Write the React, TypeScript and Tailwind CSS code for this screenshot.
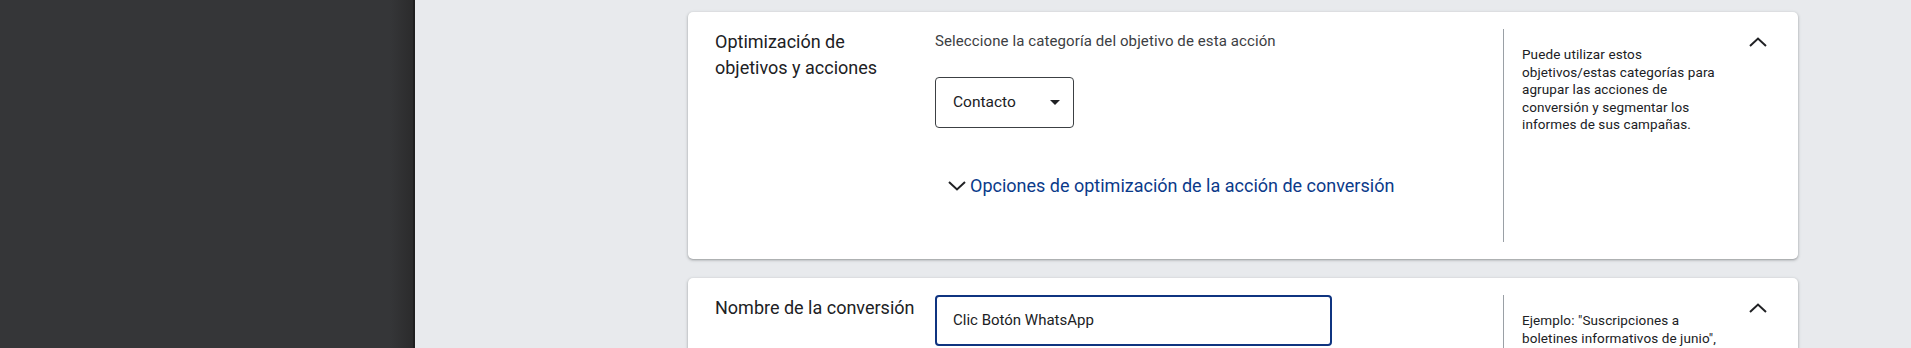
import React from "react";

const ChevronUp = () => (
  <svg width="18" height="10" viewBox="0 0 18 10" fill="none">
    <path d="M1 9L9 1.5L17 9" stroke="#202124" strokeWidth="2" />
  </svg>
);

const ChevronDown = () => (
  <svg width="18" height="10" viewBox="0 0 18 10" fill="none">
    <path d="M1 1L9 8.5L17 1" stroke="#202124" strokeWidth="2" />
  </svg>
);

const Card = ({
  title,
  help,
  children,
}: {
  title: React.ReactNode;
  help: React.ReactNode;
  children: React.ReactNode;
}) => (
  <div className="w-[1110px] rounded-[5px] bg-white pl-[27px] pr-[31px] pt-[17px] pb-[17px] shadow-[0_1px_2px_rgba(60,64,67,0.35),0_1px_3px_1px_rgba(60,64,67,0.12)] flex">
    <div className="w-[220px] shrink-0 text-[18px] leading-[26px] text-[#202124]">
      {title}
    </div>
    <div className="flex-1">{children}</div>
    <div className="w-[264px] shrink-0 border-l border-[#9aa0a6] flex">
      <div className="pl-[18px] pt-[17px] w-[215px] text-[13.5px] leading-[17.5px] tracking-[0.1px] text-[#202124]">
        {help}
      </div>
      <div className="flex-1 flex justify-end pt-[8px]">
        <ChevronUp />
      </div>
    </div>
  </div>
);

const App = () => {
  return (
    <div className="flex h-[348px] w-[1911px] overflow-hidden bg-[#e8eaed] font-['Roboto',sans-serif]">
      <div className="w-[415px] shrink-0 bg-[#353638] bg-[linear-gradient(to_right,#353638_0px,#353638_390px,#2b2b2c_413px)] border-r-2 border-[#1f1f20]" />
      <div className="flex flex-col gap-[19px] pl-[273px] pt-[12px]">
        <Card
          title={
            <>
              Optimización de
              <br />
              objetivos y acciones
            </>
          }
          help="Puede utilizar estos objetivos/estas categorías para agrupar las acciones de conversión y segmentar los informes de sus campañas.">
          <div className="pt-[2px]">
            <p className="text-[15px] leading-[20px] text-[#3c4043] tracking-[0.1px]">
              Seleccione la categoría del objetivo de esta acción
            </p>
            <div className="mt-[26px] flex h-[51px] w-[139px] items-center justify-between rounded-[4px] border border-[#3c4043] pl-[17px] pr-[13px]">
              <span className="text-[15.5px] text-[#202124]">Contacto</span>
              <svg width="10" height="5" viewBox="0 0 10 5">
                <path d="M0 0L5 5L10 0Z" fill="#202124" />
              </svg>
            </div>
            <div className="mt-[46px] ml-[13px] flex items-center gap-[4px]">
              <ChevronDown />
              <span className="text-[18px] leading-[24px] text-[#0b3a8a]">
                Opciones de optimización de la acción de conversión
              </span>
            </div>
            <div className="h-[44px]" />
          </div>
        </Card>
        <Card
          title="Nombre de la conversión"
          help={
            <>
              Ejemplo: "Suscripciones a boletines informativos de junio",
              "Registros de la web" o "Compras"
            </>
          }>
          <div className="pb-[40px]">
            <div className="flex h-[51px] w-[397px] items-center rounded-[4px] border-2 border-[#0f3480] pl-[16px]">
              <span className="text-[15px] text-[#202124]">Clic Botón WhatsApp</span>
            </div>
          </div>
        </Card>
      </div>
    </div>
  );
};

export default App;
